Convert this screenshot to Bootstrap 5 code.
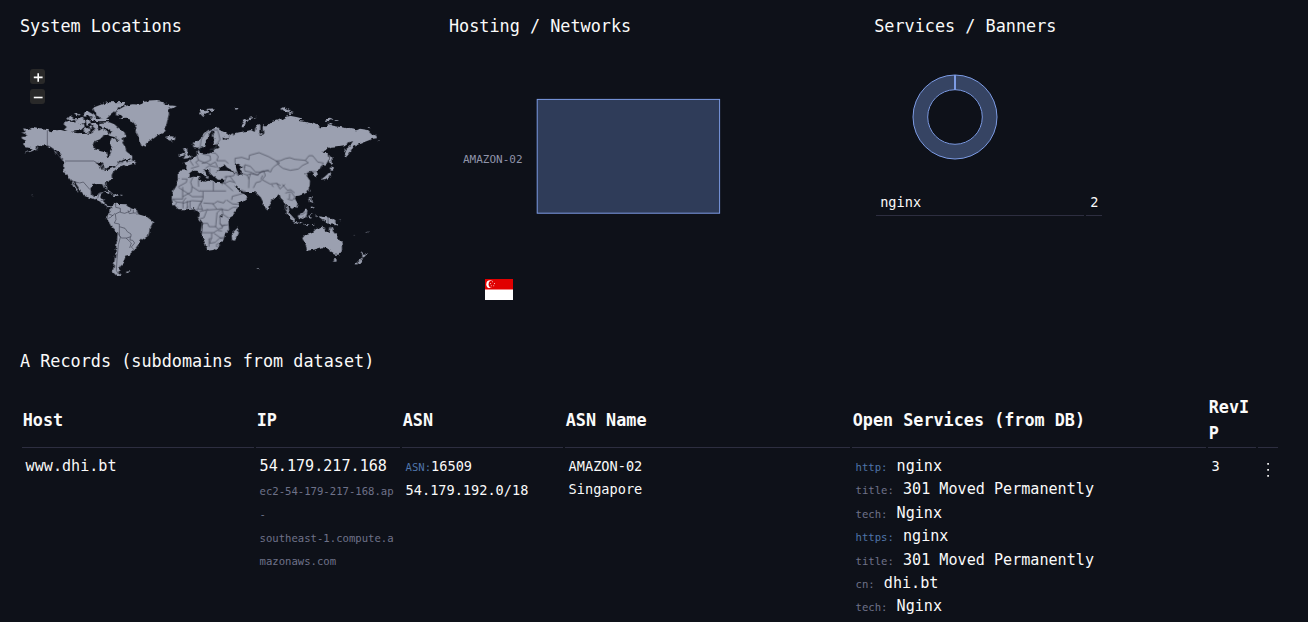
<!DOCTYPE html>
<html lang="en">
<head>
<meta charset="utf-8">
<meta name="viewport" content="width=device-width, initial-scale=1">
<title>dhi.bt</title>
<link href="https://cdn.jsdelivr.net/npm/bootstrap@5.3.0/dist/css/bootstrap.min.css" rel="stylesheet">
<style>
body{background:#0e1119;color:#fafafa;font-family:"DejaVu Sans Mono",monospace;font-size:15.12px;line-height:23.4px;overflow:hidden}
.page{padding:13px 28px 0 20px}
.ttl{font-size:16.82px;line-height:26px;font-weight:400;margin:0}
.panels{height:335px}
.p-map{width:429px}.p-net{width:425.2px}
.map-box{margin:21px 0 0 -10px;width:380px;height:225px}
.zoomers{left:20px;top:9px;gap:5px}
.zoomers button{width:15px;height:15px;background:#292929;border:0;border-radius:3px;padding:0;color:#fff}
.zoomers svg,.map-box svg{display:block}
.net-svg{display:block;margin-top:50px}
.flag{display:block;margin:60px 0 0 36px}
.donut{display:block;margin:32px 0 0 36px}
.svc{width:230px;margin-top:27px;font-size:13.6px}
table{border-collapse:separate;border-spacing:2px;table-layout:fixed}
.svc td{padding:0 4px 1px;border-bottom:1px solid #2d2e40;line-height:24px}
.recs{width:1260px;margin-top:18px}
.recs th{font-size:16.8px;line-height:26px;font-weight:700;padding:0 1px 1px .7px;border-bottom:1px solid #2d2e40;vertical-align:middle;word-break:break-all}
.recs td{padding:5px 4px 4px 3.6px;vertical-align:top;white-space:nowrap}
.recs td.mid{font-size:13.6px;line-height:23.8px;padding-top:4.6px}
.tiny{font-size:10.6px;color:#6e7289}
.blu{color:#4f75aa}
.sub-ln{line-height:23.4px;height:23.4px}
.rdns{padding-top:1.4px}
</style>
</head>
<body>
<main class="page">
<section class="d-flex panels">
<div class="p-map">
<h2 class="ttl">System Locations</h2>
<div class="map-box position-relative">
<svg width="380" height="225" viewBox="0 0 1140 675" fill="#9ba0b0" stroke-linejoin="round">
<defs><filter id="coast" x="0" y="0" width="1140" height="675" filterUnits="userSpaceOnUse"><feTurbulence type="fractalNoise" baseFrequency=".07" numOctaves="2" seed="4" result="n"/><feDisplacementMap in="SourceGraphic" in2="n" scale="13" xChannelSelector="R" yChannelSelector="G"/></filter></defs>
<g filter="url(#coast)">
<!-- North America and Greenland -->
<path d="M34 218L47 216L39 208L52 210L66 203L90 208L112 210L125 214L150 209L165 213L178 211L190 218L205 220L225 218L240 222L248 218L250 208L254 194L262 192L264 206L270 212L278 206L286 213L282 226L270 238L256 243L250 258L254 267L272 274L288 277L292 293L297 294L300 282L298 276L306 264L300 250L304 238L314 235L322 243L336 240L338 250L346 262L350 275L366 287L366 293L350 297L334 301L322 311L338 304L348 301L350 307L375 307L372 311L358 315L348 319L342 315L336 317L332 322L318 328L310 335L305 345L306 357L300 361L285 369L288 380L292 386L290 389L285 384L280 373L265 372L248 374L242 385L243 402L252 407L262 406L268 398L280 397L275 406L271 414L283 418L284 434L296 439L303 437L300 441L290 442L279 435L271 425L258 419L240 414L223 408L217 398L208 386L200 374L192 364L186 362L196 378L206 394L208 398L198 391L190 377L182 361L168 343L162 330L164 304L152 294L150 283L136 268L126 262L113 257L98 256L88 259L82 256L79 267L66 274L42 281L58 274L64 265L48 262L39 252L48 242L36 236L35 230L48 230L46 222Z"/>
<path d="M318 153l27-15 25-5 20 1 10-9 40-2 30 5-8 4 12 4 23 2-10 7-12 2 2 14-4 17-4 18-6 8 4 9-13 8-15 6-16 12-10 7-5 14-14-6-7-20-5-12-5-8 2-14-7-10-8-9-14-5-18 1 3-8-17-4z"/>
<path d="M262 138l30-11 55-1-5 9-18 10-13 13-12 9-10 10-14-2-18-10 9-11-12-1-9-8zM246 144l18-2 12 11-9 8-17-7zM160 192l10-8 20 2 16 5 12-3 3 15-11 9-30 3-18-6 8-8zM169 176l9-9 9 4 6 6-16 5zM192 164l10-4 10 4-10 5zM190 174l14 1 14-5 4 6-20 5zM192 184l24-7 10 3-4 6-20 5zM226 184l12-4 5 9-12 6zM220 154l12-1 22 13 6 7-14-2-20-8zM240 172l55 5 4 6-32 1-24-4zM244 190l16-2 4 5-14 5zM222 162l12 2-6 6-9-3zM220 206l14-2 8 10-11 5-9-5zM238 196l10 2-4 10-8-4zM268 188l30-1 15 6 12 10 15 11 8 16-10 5 3 10-12-1-16-13-17-4 10-10-12-10-15-3-11-8zM276 217l13-7 12 12-12 3zM466 230l12-2 15 2-1 9-12 3-11-5zM354 304l8-13 5 2-2 8 10 3-3 6z"/>
<path d="M132 272l6 3 3 8-4-3zM76 268l8-4-3 8zM352 277l3 2"/>
<!-- South America and Caribbean -->
<g transform="translate(0 315)">
<path d="M303 122l9-9 13 4 25 1 12 12 18 5 5 13 25 7 20 15-10 20-5 22-20 13-15 20-10 13-8 7-2 7-15 3-3 15-12 12-2 13-3 10 10 7-15 1-12-12 5-31 3-20 4-35 3-30-17-17-15-26 2-14 8-8z"/>
<path d="M280 79l12-2 16 10-10-2-9-4zM309 88l13 1 4 4-17-1zM351 320l10-1-3 5-6-1zM67 88h2v3h-2zM332 92h5v3h-5z"/>
</g>
<g transform="translate(540 0)">
<!-- Europe and Asia -->
<path d="M10 262l-1-12 15-8 10-12 12-12 16-10 20-5 7 7 11 5 16 7 4 7-10 4-12-4 2 8 10 2 8-9 10-8 2 5 8-8 10-2 22-4 13-3 11 6 2-12 8-12 7 6v24l4 3 5-5-2-18 4-7 5 5 10-11 18-6 20-6 10-6 14-4 20 4 15 4-9 8 18 2 22 5 20 6 5 6 20-1v-9l20 5 25 5 20 4 25 5 10-5 24 4 12 11 13 6 2 8-12 1-10 4-16 6-20 8-15 7-6 13-13 18-7-13 6-14 16-14 5-8-14 5-12 8-20 3-20 1-20 13-5 8 15 1 4 16-8 14-15 12-15 8 5 13-7 8-8-13-8-4-14 4 5 10 8 12-1 18-8 18-24 9-10 1-2 8 8 12-4 12-12 8-8-7-8-4 5 20 9 13-6-2-11-20-1-17-8-10-7-7-4-13-10 10-14 10-6 16-4 15-7-6-8-20-7-14-7-7-10-9-33 0-11-5-10-13-6-3 9 17 11 8 16 6 1 6-14 10-19 8-11 4-8-10-12-19-11-18 2-17 4-11-20 0-8-8 3-10 14-3 20 1 20 2 2-6-15-8-9-5-7-9-8 9-6 6-6 6-7 4 5 10-10 6-9-10-12-14-10-2 7 12 9 10-5 7-6-9-13-10-11-6-13 0-10 8-3 11-7 6-10 1-12-1 0-25 24-1 2-12-11-10 18-7 15-10 8-7-3-10 6-7 5 14 15 1 22-5 7-11 14-4-2-5-16 1-2-7 4-13-3-12 5-12-8-3-9 15-3 20-3 12-9 6-8-6-7 4-11-1z"/>
<path d="M74 338l12-6 24 0 20 4 2 8-8 5-46 0-6-5zM-17 265l8-1 1 13 9 12-5 6-16 1 6-10-5-8zM-31 283l10-6 4 9-13 6zM27 150l20-1 9 9-16 10-9-9zM50 147l24-2-4 7-18 1zM135 145l13-1-4 5-8-1zM152 202l8-18 17-11 24-3-22 8-13 13-4 11zM271 146l9-5 17 8 2 7-16 0zM297 155l13 3-4 4-9-1zM406 178l12-2 9 2-10 6-9-2zM412 188l16 2-8 4zM434 180l12 1-3 2-9-1zM532 203l10-2-1 4zM564 242l5 1-3 3zM418 284l8 6 3 18-5 8-6-16zM421 322l11 3-5 5-8-3zM421 330l3 18-14 9-19 2 12-8 11-10zM58 161l8-1-2 5-6-1z"/>
<g fill="#0e1119"><path d="M51 234l13-13 4 9-5 12 5 13 15-2-2 5-13 3-8 13-14 6-9-2-5-7 4-5 8-2 4-14 1-10z"/><path d="M134 314l11-3 10 7-6 6 6 11 0 11-9 2-4-12z"/></g>
</g>
<g transform="translate(540 315)">
<!-- Africa, Indonesia, Oceania -->
<path d="M-30 35l15 5 25-8 15 1 5 12 15 5 10-3 17 3 23 2 5 13 10 23 12 17 6 10 20-2-3 12-15 20-15 20 2 30-12 13-5 17-15 20-15 10-18 2-7-22-13-30 4-30-12-17 2-13-16-15-20 3h-25l-17-18-3-15 5-25 12-20zM128 203l8-8 9-9-1 16-9 25-8-1-2-12zM234 122l6 4-1 7-5-2zM284 133l10 7 12 13 9 10-2 7-15-14zM312 170l17 3 11 5-12 0-15-4zM323 149l12-5 12-14 5 8-3 15-7 9-15-3zM355 150l13-3-8 7 5 9-8 1zM341 177l14 1-6 3zM364 178l11-2-7 5zM376 150l3-4 1 10zM357 96l7 0 0 13 7 6-11-3zM364 124l10 4-3 4-8-2zM357 75l4-1-1 8zM386 154l17 2 20 3 13 10 8 11-15-5-15 2-11-9-13-4z"/>
<path d="M337 220l8-10 20-5 13-13 10-2 7-5 10 3v10l13 7 4-22 8 17 10 12 15 18 1 24-9 15-13 0-13-8-7-12-18-2-25 7-20 3-2-13zM431 280l9 0-1 7-6 0zM516 258l8 9 6 1-7 8-6 2zM515 278l4 3-10 12-9 6-4-3zM444 165l9 2-3 2zM490 208l7 7-2 1zM530 201l6-2-5 5zM201 309h6v2h-6zM462 169l6 3zM474 176l4 2z"/>
<path fill="#0e1119" d="M92 148l5 2-1 8-6 0z"/>
</g>
<path fill="#0e1119" d="M256 308l15-3 8 7-6 4-3 12-4-14zM275 315l8 5-3 11-4-5zM282 329l14-7 15-4 4 3-22 9z"/>
</g>
<!-- national borders -->
<g fill="none" stroke="#454858" stroke-width="2">
<path d="M112 211v46l9 3 13 12 12 15 12 16M165 303h86l16 8M315 321l13-12 12-1M190 364l19 5 11-3 20 23M263 415l4-14 8 0M272 422l14-3M282 435l10 4"/>
<g transform="translate(0 315)"><path d="M317 115l0 12 14 3 0 12 13 3 18-7 0-7M354 136l4 10 12-2 0-10M370 144l12 0M296 147l13 5 5-7M295 160l7-3 7-7M331 140l-15 7 2 17-5 10 15 3 0 8 17 5 7 10 11 7 0 8-13 4-16 0-6-8 0-26M325 205l6 12-6 22-4 45-2 32 5 10M348 219l16 15-5 15M361 215l-1 10 8 1 6 8-10 12 10 10"/></g>
<g transform="translate(540 0)"><path d="M28 273l3-16 3-20 14-20 15-7 17 0M64 209l7 17M81 207l5 14 4 18-8 11M80 250l-3 15-18 4M59 277l18 3 8 10-5 12 25 0 10 8M20 284l5 17-8 6 8 8M35 281l25 6 2 13-18 8-20-8M35 310l14-2 12 6 15-8 8 18M46 325l12-8 21 4M59 325v15M5 290l-5 12 10 15M3 325l24-7M135 310l0-15 20-3 22 7 1-13 29-8 29 12 23 13 10 6-14 8-9 9-4 10-11-4-16 4-19 0-15-17-17-5 0 10M259 303l12-1 14-6 14-3 15 5 31 3 10 7-17 8-13 11-24 4-22-6-11-8-10-14M345 302l12-15 11 0 15 19 17 3-9 18M350 339l12-5 15 1M162 318l2 15 17 3 24 10M203 344l10-9 24-5M182 340l-6 18"/></g>
<g transform="translate(540 315)"><path d="M103 36l28-4 5-11M110 33l-8 23 17-8 15 4M119 33l17 22M134 19l8 11 14-5 15 5 6 12-1 27M171 30l12-4 18 4 20-13M221 17l5 15-14 17-14 4-8 16M218 31l-6 12M218 45l22 12 20-2 12 7M250 66l-5-7M260 55l10 17 15-14M277 58l15 18 10-2 12 10M286 84l17-4 12 17-8 9-15-4M298 101l1-16M125 105l2-11 29-8 11-6-14-5M103 55l26 23"/>
<path d="M-25 42l16 0-2 10-24 13M-35 67l25 16 17 12M-22 66v36l-30 0M10 34l-8 17 4 14-2 16-26 14M25 45l1 20M6 65l22 14 3-2M30 78h78M70 48v30M39 80v20l-8 16M7 95h32M-12 98l-9 12 0 20M-54 102l14 9 18 2M-40 112l-5 9M-22 115l20-6 8-2 30 2-8 10-5 14-12 5M-8 108v23M0 108v23M31 116l7 20-12 6M40 114l32 2 10-7 19 5 6-9M51 135l30-2-13-17M37 138l17-5M50 137l-8 21-15 4M36 175l17 0 4 10 20 0 4-42 9-8 10-2M81 133l15-2 3 17 18 12M90 151v26l8 5 17-3M99 134l15 2 15-9 13 0M110 105l18 12 17 1M90 175l8 13-13 4-9-7M35 203h36l10-7 15 2M65 204v17l-8 0 0 24M63 222l-4 13 17-3 13-13 13 2M72 205l20 14 7-2M95 184l10-5M-11 131l5-7M24 132h12M78 239l8-4 5 5-6 6-8-4"/>
<path d="M324 149l14-1 9-7M414 156v19"/></g>
</g>
</svg>
<div class="zoomers position-absolute d-flex flex-column">
<button type="button" aria-label="Zoom in"><svg width="15" height="15" viewBox="0 0 15 15" stroke="#fff" stroke-width="1.6"><path d="M3.8 8.4h8.8M8.2 4.2v8.6"/></svg></button>
<button type="button" aria-label="Zoom out"><svg width="15" height="15" viewBox="0 0 15 15" stroke="#fff" stroke-width="1.6"><path d="M3.8 8.5h8.8"/></svg></button>
</div>
</div>
</div>
<div class="p-net">
<h2 class="ttl">Hosting / Networks</h2>
<svg class="net-svg" width="300" height="130" viewBox="0 0 300 130"><rect x="88.2" y="10.4" width="182.4" height="113.8" fill="#2f3c59" stroke="#7c9be4"/><text x="14" y="74" font-size="11" fill="#9094aa">AMAZON-02</text></svg>
<svg class="flag" width="28" height="21" viewBox="0 0 28 21"><path fill="#fff" d="M0 0h28v21H0z"/><path fill="#e10000" d="M0 0h28v10.5H0z"/><circle cx="5.2" cy="5.2" r="3.9" fill="#fff"/><circle cx="7.3" cy="5.2" r="3.7" fill="#e10000"/><g fill="#fff" opacity=".8"><circle cx="7.4" cy="2.8" r=".55"/><circle cx="5.6" cy="4.6" r=".55"/><circle cx="9.5" cy="4.6" r=".55"/><circle cx="6.3" cy="6.7" r=".55"/><circle cx="8.7" cy="6.7" r=".55"/></g></svg>
</div>
<div>
<h2 class="ttl">Services / Banners</h2>
<svg class="donut" width="90" height="90" viewBox="0 0 90 90"><circle cx="45" cy="46" r="34.7" fill="none" stroke="#364463" stroke-width="14.5"/><g fill="none" stroke="#7c9be4"><circle cx="45" cy="46" r="42"/><circle cx="45" cy="46" r="27.3"/><path stroke-width="2" d="M45 4v15"/></g></svg>
<table class="svc"><colgroup><col><col style="width:16px"></colgroup><tr><td>nginx</td><td>2</td></tr></table>
</div>
</section>
<section>
<h2 class="ttl">A Records (subdomains from dataset)</h2>
<table class="recs">
<colgroup><col style="width:232px"><col style="width:144px"><col style="width:161px"><col style="width:285px"><col style="width:354px"><col style="width:48px"><col style="width:20px"></colgroup>
<thead><tr><th>Host</th><th>IP</th><th>ASN</th><th>ASN Name</th><th>Open Services (from DB)</th><th>RevIP</th><th></th></tr></thead>
<tbody><tr>
<td>www.dhi.bt</td>
<td><div class="sub-ln">54.179.217.168</div><div class="tiny"><div class="sub-ln rdns">ec2-54-179-217-168.ap</div><div class="sub-ln rdns">-</div><div class="sub-ln rdns">southeast-1.compute.a</div><div class="sub-ln rdns">mazonaws.com</div></div></td>
<td class="mid"><span class="tiny blu">ASN:</span>16509<br>54.179.192.0/18</td>
<td class="mid">AMAZON-02<br>Singapore</td>
<td><div class="sub-ln"><span class="tiny blu">http:</span> nginx</div><div class="sub-ln"><span class="tiny">title:</span> 301 Moved Permanently</div><div class="sub-ln"><span class="tiny">tech:</span> Nginx</div><div class="sub-ln"><span class="tiny blu">https:</span> nginx</div><div class="sub-ln"><span class="tiny">title:</span> 301 Moved Permanently</div><div class="sub-ln"><span class="tiny">cn:</span> dhi.bt</div><div class="sub-ln"><span class="tiny">tech:</span> Nginx</div></td>
<td class="mid">3</td>
<td><svg class="d-block" width="12" height="24" viewBox="0 0 12 24" fill="#fff" opacity=".9"><path d="M5.2 8h1.8v1.8H5.2zM5.2 14h1.8v1.8H5.2zM5.2 20h1.8v1.8H5.2z"/></svg></td>
</tr></tbody>
</table>
</section>
</main>
<script src="https://cdn.jsdelivr.net/npm/bootstrap@5.3.0/dist/js/bootstrap.bundle.min.js"></script>
</body>
</html>
